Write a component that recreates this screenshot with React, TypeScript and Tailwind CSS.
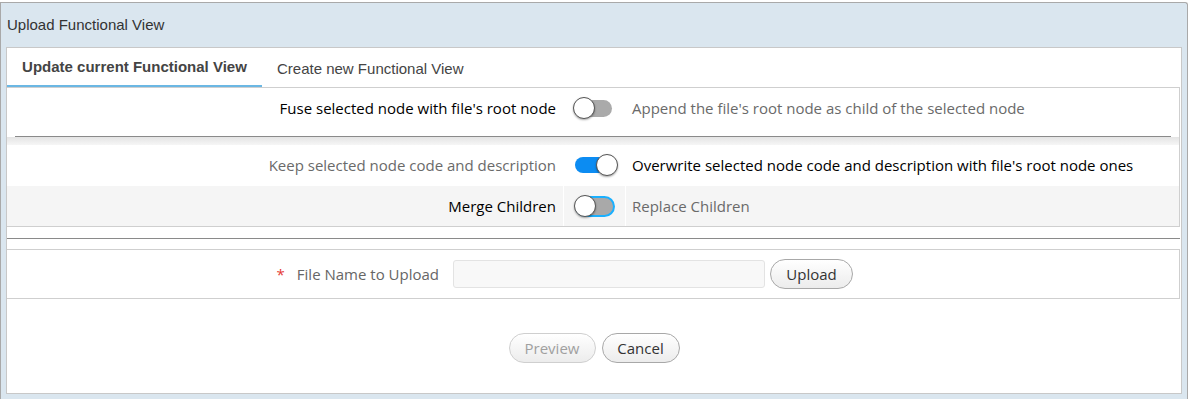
import React from "react";

const bodyFont = { fontFamily: '"Open Sans", "Noto Sans", sans-serif' };
const uiFont = { fontFamily: '"Liberation Sans", Arial, sans-serif' };

const pillButtonClassName =
  "inline-flex h-[30px] items-center justify-center rounded-full border px-4 text-[15px] bg-gradient-to-b from-white to-[#ececec]";

function Toggle({ checked, focused }: { checked?: boolean; focused?: boolean }) {
  return (
    <div className="relative h-[22px] w-[46px] shrink-0">
      <div
        className={
          checked
            ? "absolute left-[2px] top-[3px] h-[16px] w-[38px] rounded-full bg-[#0c8cf2]"
            : focused
              ? "absolute left-[1px] top-[1px] h-[21px] w-[40px] rounded-full border-2 border-[#1ab0ff] bg-[#a9a9a9]"
              : "absolute left-[2px] top-[3px] h-[17px] w-[37px] rounded-full bg-[#aaaaaa]"
        }
      />
      <div
        className={
          "absolute top-0 h-[22px] w-[22px] rounded-full border border-[#555] bg-white shadow-[0_1px_2px_rgba(0,0,0,0.35)] " +
          (checked ? "left-[23px]" : "left-0")
        }
      />
    </div>
  );
}

function OptionRow({
  left,
  right,
  leftStrong,
  checked,
  focused,
  shaded,
  dividers,
}: {
  left: string;
  right: string;
  leftStrong?: boolean;
  checked?: boolean;
  focused?: boolean;
  shaded?: boolean;
  dividers?: boolean;
}) {
  return (
    <div className={"flex h-[40px] items-center " + (shaded ? "bg-[#f5f5f5]" : "bg-white")}>
      <div
        className={
          "w-[556px] shrink-0 pr-[7px] text-right text-[15px] " +
          (leftStrong ? "text-[#000]" : "text-[#6a6a6a]")
        }
      >
        {left}
      </div>
      <div
        className={
          "flex h-full w-[63px] shrink-0 items-center pl-[10px] " +
          (dividers ? "border-x border-white" : "")
        }
      >
        <Toggle checked={checked} focused={focused} />
      </div>
      <div
        className={
          "pl-[6px] text-[15px] " + (leftStrong ? "text-[#6a6a6a]" : "text-[#000]")
        }
      >
        {right}
      </div>
    </div>
  );
}

export default function App() {
  return (
    <div className="h-[399px] w-[1188px] bg-white pt-[2px]" style={bodyFont}>
      <div className="h-[397px] rounded-tr-[3px] border-x border-t border-[#a9a9a9] bg-[#dae6ef] px-[5px]">
        <div className="flex h-[44px] items-center pl-[1px] pt-[1px] text-[15px] text-[#333]" style={uiFont}>
          Upload Functional View
        </div>

        <div className="h-[347px] border border-[#c8c8c8] bg-white">
          {/* tabs */}
          <div className="flex h-[39px] items-end" style={uiFont}>
            <div className="flex h-[39px] w-[255px] items-center justify-center border-b-2 border-[#6bb7e3] pt-[2px] text-[15px] font-bold text-[#444]">
              Update current Functional View
            </div>
            <div className="flex h-[39px] items-center px-[15px] pt-[4px] text-[15px] text-[#444]">
              Create new Functional View
            </div>
          </div>

          {/* options */}
          <div className="mr-[1px] border border-l-0 border-[#cfcfcf]">
            <OptionRow
              left="Fuse selected node with file's root node"
              right="Append the file's root node as child of the selected node"
              leftStrong
            />
            <div className="h-[8px] bg-white" />
            <div className="mx-[8px] border-t border-[#8a8a8a]" />
            <div className="h-[8px] bg-gradient-to-b from-[#e4e4e4] to-[#f6f6f6]" />
            <OptionRow
              left="Keep selected node code and description"
              right="Overwrite selected node code and description with file's root node ones"
              checked
            />
            <div className="h-[1px] bg-white" />
            <OptionRow
              left="Merge Children"
              right="Replace Children"
              leftStrong
              focused
              shaded
              dividers
            />
          </div>

          <div className="mr-[1px] mt-[11px] border-t border-[#8a8a8a]" />

          {/* file upload */}
          <div className="mr-[1px] mt-[10px] flex h-[50px] items-center border border-l-0 border-[#cfcfcf]">
            <div className="w-[432px] shrink-0 text-right text-[15px] text-[#666]">
              <span className="mr-[12px] text-[#e53935]">*</span>
              File Name to Upload
            </div>
            <input
              className="ml-[14px] h-[28px] w-[312px] rounded-[3px] border border-[#e3e3e3] bg-[#f8f8f8] outline-none"
              readOnly
            />
            <button className={pillButtonClassName + " ml-[5px] w-[83px] border-[#a8a8a8] text-[#333]"}>
              Upload
            </button>
          </div>

          {/* actions */}
          <div className="mt-[34px] flex justify-center gap-[6px]">
            <button
              className={pillButtonClassName + " w-[87px] border-[#cfcfcf] text-[#a0a0a0]"}
              disabled
            >
              Preview
            </button>
            <button className={pillButtonClassName + " w-[78px] border-[#a8a8a8] text-[#333]"}>
              Cancel
            </button>
          </div>
        </div>
      </div>
    </div>
  );
}
